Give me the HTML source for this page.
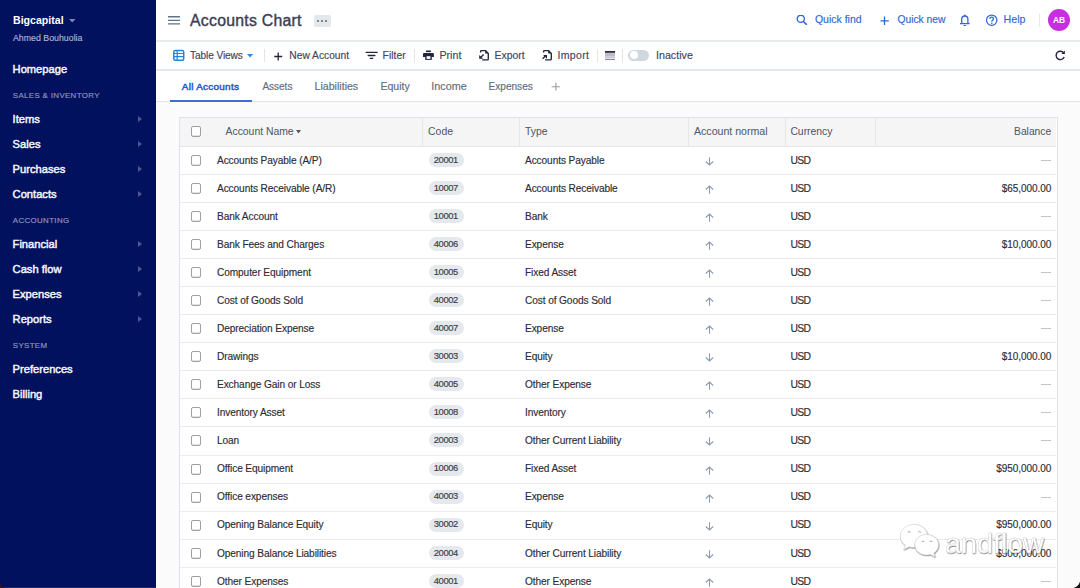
<!DOCTYPE html>
<html><head><meta charset="utf-8"><style>
html,body{margin:0;padding:0;width:1080px;height:588px;overflow:hidden;background:#fff;font-family:"Liberation Sans",sans-serif;}
.t{position:absolute;white-space:nowrap;}
.s{-webkit-text-stroke:0.15px currentColor;}
</style></head><body>
<div style="position:absolute;left:0;top:0;width:156px;height:588px;background:#01115e"></div>
<div class="t" style="top:14px;font-size:10.6px;line-height:12px;color:#fff;font-weight:700;left:13.00px;">Bigcapital</div>
<svg style="position:absolute;left:69px;top:19px" width="7" height="4"><path d="M0 0H6.5L3.25 3.5Z" fill="#7f88b3"/></svg>
<div class="t s" style="top:33px;font-size:8.8px;line-height:10px;color:#aeb4d0;left:13.00px;">Ahmed Bouhuolia</div>
<div class="t s" style="top:63px;font-size:11.15px;line-height:12px;color:#f4f5fa;left:12.60px;-webkit-text-stroke:0.45px #f4f5fa;">Homepage</div>
<div class="t s" style="top:91px;font-size:7.9px;line-height:9px;color:#8c94bb;letter-spacing:0.36px;left:12.80px;-webkit-text-stroke:0.18px #8c94bb;">SALES &amp; INVENTORY</div>
<div class="t s" style="top:113px;font-size:11.15px;line-height:12px;color:#f4f5fa;left:12.60px;-webkit-text-stroke:0.45px #f4f5fa;">Items</div>
<svg style="position:absolute;left:137.8px;top:115.8px" width="6" height="7"><path d="M0 0L4 3.05L0 6.1Z" fill="#4d5792"/></svg>
<div class="t s" style="top:138px;font-size:11.15px;line-height:12px;color:#f4f5fa;left:12.60px;-webkit-text-stroke:0.45px #f4f5fa;">Sales</div>
<svg style="position:absolute;left:137.8px;top:140.8px" width="6" height="7"><path d="M0 0L4 3.05L0 6.1Z" fill="#4d5792"/></svg>
<div class="t s" style="top:163px;font-size:11.15px;line-height:12px;color:#f4f5fa;left:12.60px;-webkit-text-stroke:0.45px #f4f5fa;">Purchases</div>
<svg style="position:absolute;left:137.8px;top:165.8px" width="6" height="7"><path d="M0 0L4 3.05L0 6.1Z" fill="#4d5792"/></svg>
<div class="t s" style="top:188px;font-size:11.15px;line-height:12px;color:#f4f5fa;left:12.60px;-webkit-text-stroke:0.45px #f4f5fa;">Contacts</div>
<svg style="position:absolute;left:137.8px;top:190.8px" width="6" height="7"><path d="M0 0L4 3.05L0 6.1Z" fill="#4d5792"/></svg>
<div class="t s" style="top:216px;font-size:7.9px;line-height:9px;color:#8c94bb;letter-spacing:0.36px;left:12.80px;-webkit-text-stroke:0.18px #8c94bb;">ACCOUNTING</div>
<div class="t s" style="top:238px;font-size:11.15px;line-height:12px;color:#f4f5fa;left:12.60px;-webkit-text-stroke:0.45px #f4f5fa;">Financial</div>
<svg style="position:absolute;left:137.8px;top:240.8px" width="6" height="7"><path d="M0 0L4 3.05L0 6.1Z" fill="#4d5792"/></svg>
<div class="t s" style="top:263px;font-size:11.15px;line-height:12px;color:#f4f5fa;left:12.60px;-webkit-text-stroke:0.45px #f4f5fa;">Cash flow</div>
<svg style="position:absolute;left:137.8px;top:265.8px" width="6" height="7"><path d="M0 0L4 3.05L0 6.1Z" fill="#4d5792"/></svg>
<div class="t s" style="top:288px;font-size:11.15px;line-height:12px;color:#f4f5fa;left:12.60px;-webkit-text-stroke:0.45px #f4f5fa;">Expenses</div>
<svg style="position:absolute;left:137.8px;top:290.8px" width="6" height="7"><path d="M0 0L4 3.05L0 6.1Z" fill="#4d5792"/></svg>
<div class="t s" style="top:313px;font-size:11.15px;line-height:12px;color:#f4f5fa;left:12.60px;-webkit-text-stroke:0.45px #f4f5fa;">Reports</div>
<svg style="position:absolute;left:137.8px;top:315.8px" width="6" height="7"><path d="M0 0L4 3.05L0 6.1Z" fill="#4d5792"/></svg>
<div class="t s" style="top:341px;font-size:7.9px;line-height:9px;color:#8c94bb;letter-spacing:0.36px;left:12.80px;-webkit-text-stroke:0.18px #8c94bb;">SYSTEM</div>
<div class="t s" style="top:363px;font-size:11.15px;line-height:12px;color:#f4f5fa;left:12.60px;-webkit-text-stroke:0.45px #f4f5fa;">Preferences</div>
<div class="t s" style="top:388px;font-size:11.15px;line-height:12px;color:#f4f5fa;left:12.60px;-webkit-text-stroke:0.45px #f4f5fa;">Billing</div>
<div style="position:absolute;left:156px;top:0;width:924px;height:40px;background:#fff;border-bottom:2px solid #e8eced"></div>
<svg style="position:absolute;left:167px;top:13px" width="14" height="14"><path d="M1 3.7H13M1 7.3H13M1 10.8H13" stroke="#5f7486" stroke-width="1.35"/></svg>
<div class="t s" style="top:12px;font-size:15.8px;line-height:17px;color:#3c3d52;letter-spacing:0.27px;left:190.00px;-webkit-text-stroke:0.4px #3c3d52;">Accounts Chart</div>
<div style="position:absolute;left:314px;top:15px;width:17px;height:11.5px;border-radius:2px;background:#e3e8ed"></div>
<div style="position:absolute;left:317.1px;top:19.5px;width:2.2px;height:2.2px;border-radius:50%;background:#566a7d"></div>
<div style="position:absolute;left:321.1px;top:19.5px;width:2.2px;height:2.2px;border-radius:50%;background:#566a7d"></div>
<div style="position:absolute;left:325.1px;top:19.5px;width:2.2px;height:2.2px;border-radius:50%;background:#566a7d"></div>
<svg style="position:absolute;left:796px;top:15px" width="12" height="10"><circle cx="4.8" cy="3.8" r="3.6" fill="none" stroke="#2f68d3" stroke-width="1.35"/><path d="M7.4 6.5L10.4 9.4" stroke="#2f68d3" stroke-width="1.5" stroke-linecap="round"/></svg>
<div class="t s" style="top:13px;font-size:10.5px;line-height:12px;color:#2f68d3;left:814.90px;">Quick find</div>
<svg style="position:absolute;left:880px;top:15.5px" width="10" height="10"><path d="M4.5 0.5V9M0.5 4.8H8.8" stroke="#2f68d3" stroke-width="1.3"/></svg>
<div class="t s" style="top:14px;font-size:10.3px;line-height:11px;color:#2f68d3;left:897.40px;">Quick new</div>
<svg style="position:absolute;left:960px;top:14px" width="10" height="13"><circle cx="4.8" cy="1.3" r="0.85" fill="#2f68d3"/><path d="M1.7 9.2V5.3C1.7 3.3 3 2 4.8 2C6.6 2 7.9 3.3 7.9 5.3V9.2" fill="none" stroke="#2f68d3" stroke-width="1.3"/><path d="M0.4 9.6H9.2" stroke="#2f68d3" stroke-width="1.3" stroke-linecap="round"/><path d="M4.1 11.5H5.5" stroke="#2f68d3" stroke-width="1.1" stroke-linecap="round"/></svg>
<svg style="position:absolute;left:985px;top:14px" width="14" height="14"><circle cx="6.7" cy="6.2" r="5.2" fill="none" stroke="#2f68d3" stroke-width="1.25"/><path d="M4.9 4.9C4.9 3.8 5.7 3.1 6.7 3.1C7.7 3.1 8.5 3.8 8.5 4.8C8.5 6.1 6.8 6.1 6.8 7.8" fill="none" stroke="#2f68d3" stroke-width="1.25"/><circle cx="6.8" cy="9.3" r="0.8" fill="#2f68d3"/></svg>
<div class="t s" style="top:13px;font-size:10.7px;line-height:12px;color:#2f68d3;left:1003.50px;">Help</div>
<div style="position:absolute;left:1039px;top:13.5px;width:1px;height:13px;background:#e6e9ec"></div>
<div style="position:absolute;left:1048px;top:9px;width:22px;height:22px;border-radius:50%;background:#c72ee0"></div>
<div class="t" style="top:15px;font-size:8.4px;line-height:10px;color:#fff;font-weight:700;left:1053.00px;">AB</div>
<div style="position:absolute;left:156px;top:42px;width:924px;height:27px;background:#fff;border-bottom:2px solid #e3e6ea"></div>
<svg style="position:absolute;left:168px;top:46px" width="20" height="18"><rect x="5.8" y="4.6" width="9.9" height="9.6" rx="1.5" fill="none" stroke="#2584dc" stroke-width="1.5"/><path d="M5.8 7.5H15.7M5.8 10.7H15.7M9.2 4.6V14.2" stroke="#2584dc" stroke-width="1.2"/></svg>
<div class="t s" style="top:50px;font-size:10.1px;line-height:11px;color:#44445a;letter-spacing:-0.08px;left:190.00px;">Table Views</div>
<svg style="position:absolute;left:246.5px;top:54px" width="7" height="4"><path d="M0 0H6.2L3.1 3.6Z" fill="#2f8ce0"/></svg>
<div style="position:absolute;left:264px;top:49px;width:1px;height:13px;background:#e1e5e9"></div>
<svg style="position:absolute;left:274px;top:51.5px" width="9" height="9"><path d="M4.2 0.5V8.5M0.3 4.5H8.2" stroke="#24243c" stroke-width="1.3"/></svg>
<div class="t s" style="top:50px;font-size:10.25px;line-height:11px;color:#44445a;left:289.30px;">New Account</div>
<svg style="position:absolute;left:362px;top:46px" width="20" height="18"><path d="M4.2 6.4H15.1M6.2 9.5H12.9M8.2 12.3H10.8" stroke="#24243c" stroke-width="1.35" stroke-linecap="round"/></svg>
<div class="t s" style="top:50px;font-size:10.4px;line-height:11px;color:#44445a;left:382.60px;">Filter</div>
<div style="position:absolute;left:414px;top:49px;width:1px;height:13px;background:#e1e5e9"></div>
<svg style="position:absolute;left:418px;top:46px" width="20" height="18"><rect x="8" y="4.5" width="4.9" height="1.6" fill="#24243c"/><path d="M6 7H14.9Q15.9 7 15.9 8V10.9H5V8Q5 7 6 7Z" fill="#24243c"/><path d="M7.2 9.2H13.8V13.9H7.2Z" fill="#24243c"/><rect x="8.6" y="10.2" width="3.8" height="2.7" fill="#fff"/></svg>
<div class="t s" style="top:49px;font-size:10.7px;line-height:12px;color:#44445a;left:439.40px;">Print</div>
<svg style="position:absolute;left:474px;top:46px" width="20" height="18"><path d="M6.6 6.6V5.3Q6.6 4.6 7.4 4.6H11.4L14.3 7.5V13Q14.3 13.9 13.4 13.9H8.2" fill="none" stroke="#24243c" stroke-width="1.35" stroke-linejoin="round"/><path d="M11.2 4.6L14.3 7.6H11.2Z" fill="#24243c"/><path d="M9.6 8.4L6.6 11.4" stroke="#24243c" stroke-width="1.35"/><path d="M5.2 8.9V12.8H9.1Z" fill="#24243c"/></svg>
<div class="t s" style="top:49px;font-size:10.5px;line-height:12px;color:#44445a;left:494.40px;">Export</div>
<svg style="position:absolute;left:537px;top:46px" width="20" height="18"><path d="M6.6 6.6V5.3Q6.6 4.6 7.4 4.6H11.4L14.3 7.5V13Q14.3 13.9 13.4 13.9H8.2" fill="none" stroke="#24243c" stroke-width="1.35" stroke-linejoin="round"/><path d="M11.2 4.6L14.3 7.6H11.2Z" fill="#24243c"/><path d="M5.6 12.8L8.6 9.8" stroke="#24243c" stroke-width="1.35"/><path d="M6.1 8.9H10V12.8Z" fill="#24243c"/></svg>
<div class="t s" style="top:49px;font-size:10.5px;line-height:12px;color:#44445a;left:557.40px;letter-spacing:0.35px;">Import</div>
<div style="position:absolute;left:597px;top:49px;width:1px;height:13px;background:#e1e5e9"></div>
<svg style="position:absolute;left:600px;top:46px" width="20" height="18"><rect x="5" y="5" width="10" height="1.8" fill="#2a2a46"/><rect x="5" y="7" width="10" height="3.2" fill="#bdbdc9"/><rect x="5" y="10.6" width="10" height="1.1" fill="#9d9dae"/><rect x="5" y="13" width="10" height="1" fill="#8a8a9c"/><rect x="5" y="11.7" width="10" height="1.3" fill="#e4e4ea"/></svg>
<div style="position:absolute;left:622px;top:49px;width:1px;height:13px;background:#e1e5e9"></div>
<div style="position:absolute;left:628.3px;top:50px;width:20.4px;height:10.7px;border-radius:6px;background:#cfd7df"></div>
<div style="position:absolute;left:629.6px;top:51.3px;width:8.2px;height:8.2px;border-radius:50%;background:#fff"></div>
<div class="t s" style="top:49px;font-size:10.7px;line-height:12px;color:#44445a;left:656.00px;">Inactive</div>
<svg style="position:absolute;left:1055px;top:50px" width="11" height="11"><path d="M8.9 3.2A4.2 4.2 0 1 0 9.2 7" fill="none" stroke="#25253d" stroke-width="1.4"/><path d="M6.3 4.1H9.9V0.5Z" fill="#25253d"/></svg>
<div style="position:absolute;left:156px;top:71px;width:924px;height:30px;background:#fff;border-bottom:1.3px solid #e1e5e9"></div>
<div class="t s" style="top:81px;font-size:9.9px;line-height:11px;color:#2559c9;letter-spacing:0.3px;left:181.80px;-webkit-text-stroke:0.5px #2559c9;">All Accounts</div>
<div style="position:absolute;left:170px;top:99.5px;width:82px;height:2px;background:#3a6fd5"></div>
<div class="t s" style="top:81px;font-size:10px;line-height:11px;color:#606c7d;left:262.40px;">Assets</div>
<div class="t s" style="top:80px;font-size:10.6px;line-height:12px;color:#606c7d;left:314.60px;">Liabilities</div>
<div class="t s" style="top:80px;font-size:10.6px;line-height:12px;color:#606c7d;left:380.40px;">Equity</div>
<div class="t s" style="top:80px;font-size:10.8px;line-height:12px;color:#606c7d;left:431.30px;">Income</div>
<div class="t s" style="top:81px;font-size:10.1px;line-height:11px;color:#606c7d;left:488.50px;">Expenses</div>
<svg style="position:absolute;left:550.5px;top:81.5px" width="10" height="10"><path d="M4.9 0.7V8.4M0.7 4.7H9.1" stroke="#9d9d9f" stroke-width="1.15"/></svg>
<div style="position:absolute;left:156px;top:102px;width:924px;height:486px;background:#fbfbfc"></div>
<div style="position:absolute;left:179px;top:117px;width:877px;height:480px;background:#fff;border:1px solid #dde3e8;border-bottom:none"></div>
<div style="position:absolute;left:180px;top:118px;width:876px;height:28px;background:#f5f5f6;border-bottom:1px solid #e2e6ea"></div>
<div style="position:absolute;left:422.0px;top:118px;width:1px;height:28px;background:#e4e7ea"></div>
<div style="position:absolute;left:519.0px;top:118px;width:1px;height:28px;background:#e4e7ea"></div>
<div style="position:absolute;left:688.0px;top:118px;width:1px;height:28px;background:#e4e7ea"></div>
<div style="position:absolute;left:784.5px;top:118px;width:1px;height:28px;background:#e4e7ea"></div>
<div style="position:absolute;left:875.0px;top:118px;width:1px;height:28px;background:#e4e7ea"></div>
<div style="position:absolute;left:191px;top:126.2px;width:8.3px;height:8.5px;border:1px solid #a0a0a2;border-radius:2px;background:#fff;box-shadow:inset 0 -1px 0 #e4e4e4"></div>
<div class="t s" style="top:126px;font-size:10.4px;line-height:11px;color:#4f5a6a;left:225.50px;-webkit-text-stroke:0.05px #4f5a6a;">Account Name</div>
<svg style="position:absolute;left:296px;top:129.8px" width="6" height="4"><path d="M0 0H5L2.5 3.4Z" fill="#505560"/></svg>
<div class="t s" style="top:126px;font-size:10.4px;line-height:11px;color:#4f5a6a;left:428.10px;-webkit-text-stroke:0.05px #4f5a6a;">Code</div>
<div class="t s" style="top:126px;font-size:10.4px;line-height:11px;color:#4f5a6a;left:525.00px;-webkit-text-stroke:0.05px #4f5a6a;">Type</div>
<div class="t s" style="top:125px;font-size:10.6px;line-height:12px;color:#4f5a6a;left:694.00px;-webkit-text-stroke:0.05px #4f5a6a;">Account normal</div>
<div class="t s" style="top:126px;font-size:10.36px;line-height:11px;color:#4f5a6a;left:790.40px;-webkit-text-stroke:0.05px #4f5a6a;">Currency</div>
<div class="t s" style="top:126px;font-size:10.26px;line-height:11px;color:#4f5a6a;right:28.90px;-webkit-text-stroke:0.05px #4f5a6a;">Balance</div>
<div style="position:absolute;left:191px;top:155.2px;width:8.3px;height:8.5px;border:1px solid #a0a0a2;border-radius:2px;background:#fff;box-shadow:inset 0 -1px 0 #e4e4e4"></div>
<div class="t s" style="top:155px;font-size:10.15px;line-height:11px;color:#2c2d35;letter-spacing:-0.1px;left:217.00px;">Accounts Payable (A/P)</div>
<div style="position:absolute;left:428.5px;top:153px;width:35px;height:13.6px;border-radius:7px;background:#e5e8ec"></div>
<div class="t s" style="top:154px;font-size:9.4px;line-height:11px;color:#3a3d44;letter-spacing:-0.4px;left:433.80px;">20001</div>
<div class="t s" style="top:155px;font-size:10.15px;line-height:11px;color:#2c2d35;letter-spacing:-0.1px;left:525.00px;">Accounts Payable</div>
<svg style="position:absolute;left:705px;top:156.5px" width="9" height="9"><path d="M4.5 0.3V8M0.8 4.5L4.5 8L8.2 4.5" fill="none" stroke="#8a9bb0" stroke-width="1.05"/></svg>
<div class="t s" style="top:155px;font-size:10.4px;line-height:11px;color:#2c2d35;letter-spacing:-0.8px;left:790.60px;">USD</div>
<div style="position:absolute;left:1041.3px;top:159.6px;width:9.7px;height:1.1px;background:#c3c6ca"></div>
<div style="position:absolute;left:180px;top:174px;width:876px;height:1px;background:#e9ecee"></div>
<div style="position:absolute;left:191px;top:183.2px;width:8.3px;height:8.5px;border:1px solid #a0a0a2;border-radius:2px;background:#fff;box-shadow:inset 0 -1px 0 #e4e4e4"></div>
<div class="t s" style="top:183px;font-size:10.15px;line-height:11px;color:#2c2d35;letter-spacing:-0.1px;left:217.00px;">Accounts Receivable (A/R)</div>
<div style="position:absolute;left:428.5px;top:181px;width:35px;height:13.6px;border-radius:7px;background:#e5e8ec"></div>
<div class="t s" style="top:182px;font-size:9.4px;line-height:11px;color:#3a3d44;letter-spacing:-0.4px;left:433.80px;">10007</div>
<div class="t s" style="top:183px;font-size:10.15px;line-height:11px;color:#2c2d35;letter-spacing:-0.1px;left:525.00px;">Accounts Receivable</div>
<svg style="position:absolute;left:705px;top:185px" width="9" height="9"><path d="M4.5 8.7V1M0.8 4.5L4.5 1L8.2 4.5" fill="none" stroke="#8a9bb0" stroke-width="1.05"/></svg>
<div class="t s" style="top:183px;font-size:10.4px;line-height:11px;color:#2c2d35;letter-spacing:-0.8px;left:790.60px;">USD</div>
<div class="t s" style="top:183px;font-size:10.0px;line-height:11px;color:#2c2d35;letter-spacing:-0.05px;right:28.80px;">$65,000.00</div>
<div style="position:absolute;left:180px;top:202px;width:876px;height:1px;background:#e9ecee"></div>
<div style="position:absolute;left:191px;top:211.2px;width:8.3px;height:8.5px;border:1px solid #a0a0a2;border-radius:2px;background:#fff;box-shadow:inset 0 -1px 0 #e4e4e4"></div>
<div class="t s" style="top:211px;font-size:10.15px;line-height:11px;color:#2c2d35;letter-spacing:-0.1px;left:217.00px;">Bank Account</div>
<div style="position:absolute;left:428.5px;top:209px;width:35px;height:13.6px;border-radius:7px;background:#e5e8ec"></div>
<div class="t s" style="top:210px;font-size:9.4px;line-height:11px;color:#3a3d44;letter-spacing:-0.4px;left:433.80px;">10001</div>
<div class="t s" style="top:211px;font-size:10.15px;line-height:11px;color:#2c2d35;letter-spacing:-0.1px;left:525.00px;">Bank</div>
<svg style="position:absolute;left:705px;top:213px" width="9" height="9"><path d="M4.5 8.7V1M0.8 4.5L4.5 1L8.2 4.5" fill="none" stroke="#8a9bb0" stroke-width="1.05"/></svg>
<div class="t s" style="top:211px;font-size:10.4px;line-height:11px;color:#2c2d35;letter-spacing:-0.8px;left:790.60px;">USD</div>
<div style="position:absolute;left:1041.3px;top:215.6px;width:9.7px;height:1.1px;background:#c3c6ca"></div>
<div style="position:absolute;left:180px;top:230px;width:876px;height:1px;background:#e9ecee"></div>
<div style="position:absolute;left:191px;top:239.2px;width:8.3px;height:8.5px;border:1px solid #a0a0a2;border-radius:2px;background:#fff;box-shadow:inset 0 -1px 0 #e4e4e4"></div>
<div class="t s" style="top:239px;font-size:10.15px;line-height:11px;color:#2c2d35;letter-spacing:-0.1px;left:217.00px;">Bank Fees and Charges</div>
<div style="position:absolute;left:428.5px;top:237px;width:35px;height:13.6px;border-radius:7px;background:#e5e8ec"></div>
<div class="t s" style="top:238px;font-size:9.4px;line-height:11px;color:#3a3d44;letter-spacing:-0.4px;left:433.80px;">40006</div>
<div class="t s" style="top:239px;font-size:10.15px;line-height:11px;color:#2c2d35;letter-spacing:-0.1px;left:525.00px;">Expense</div>
<svg style="position:absolute;left:705px;top:241px" width="9" height="9"><path d="M4.5 8.7V1M0.8 4.5L4.5 1L8.2 4.5" fill="none" stroke="#8a9bb0" stroke-width="1.05"/></svg>
<div class="t s" style="top:239px;font-size:10.4px;line-height:11px;color:#2c2d35;letter-spacing:-0.8px;left:790.60px;">USD</div>
<div class="t s" style="top:239px;font-size:10.0px;line-height:11px;color:#2c2d35;letter-spacing:-0.05px;right:28.80px;">$10,000.00</div>
<div style="position:absolute;left:180px;top:258px;width:876px;height:1px;background:#e9ecee"></div>
<div style="position:absolute;left:191px;top:267.2px;width:8.3px;height:8.5px;border:1px solid #a0a0a2;border-radius:2px;background:#fff;box-shadow:inset 0 -1px 0 #e4e4e4"></div>
<div class="t s" style="top:267px;font-size:10.15px;line-height:11px;color:#2c2d35;letter-spacing:-0.1px;left:217.00px;">Computer Equipment</div>
<div style="position:absolute;left:428.5px;top:265px;width:35px;height:13.6px;border-radius:7px;background:#e5e8ec"></div>
<div class="t s" style="top:266px;font-size:9.4px;line-height:11px;color:#3a3d44;letter-spacing:-0.4px;left:433.80px;">10005</div>
<div class="t s" style="top:267px;font-size:10.15px;line-height:11px;color:#2c2d35;letter-spacing:-0.1px;left:525.00px;">Fixed Asset</div>
<svg style="position:absolute;left:705px;top:269px" width="9" height="9"><path d="M4.5 8.7V1M0.8 4.5L4.5 1L8.2 4.5" fill="none" stroke="#8a9bb0" stroke-width="1.05"/></svg>
<div class="t s" style="top:267px;font-size:10.4px;line-height:11px;color:#2c2d35;letter-spacing:-0.8px;left:790.60px;">USD</div>
<div style="position:absolute;left:1041.3px;top:271.6px;width:9.7px;height:1.1px;background:#c3c6ca"></div>
<div style="position:absolute;left:180px;top:286px;width:876px;height:1px;background:#e9ecee"></div>
<div style="position:absolute;left:191px;top:295.2px;width:8.3px;height:8.5px;border:1px solid #a0a0a2;border-radius:2px;background:#fff;box-shadow:inset 0 -1px 0 #e4e4e4"></div>
<div class="t s" style="top:295px;font-size:10.15px;line-height:11px;color:#2c2d35;letter-spacing:-0.1px;left:217.00px;">Cost of Goods Sold</div>
<div style="position:absolute;left:428.5px;top:293px;width:35px;height:13.6px;border-radius:7px;background:#e5e8ec"></div>
<div class="t s" style="top:294px;font-size:9.4px;line-height:11px;color:#3a3d44;letter-spacing:-0.4px;left:433.80px;">40002</div>
<div class="t s" style="top:295px;font-size:10.15px;line-height:11px;color:#2c2d35;letter-spacing:-0.1px;left:525.00px;">Cost of Goods Sold</div>
<svg style="position:absolute;left:705px;top:297px" width="9" height="9"><path d="M4.5 8.7V1M0.8 4.5L4.5 1L8.2 4.5" fill="none" stroke="#8a9bb0" stroke-width="1.05"/></svg>
<div class="t s" style="top:295px;font-size:10.4px;line-height:11px;color:#2c2d35;letter-spacing:-0.8px;left:790.60px;">USD</div>
<div style="position:absolute;left:1041.3px;top:299.6px;width:9.7px;height:1.1px;background:#c3c6ca"></div>
<div style="position:absolute;left:180px;top:314px;width:876px;height:1px;background:#e9ecee"></div>
<div style="position:absolute;left:191px;top:323.2px;width:8.3px;height:8.5px;border:1px solid #a0a0a2;border-radius:2px;background:#fff;box-shadow:inset 0 -1px 0 #e4e4e4"></div>
<div class="t s" style="top:323px;font-size:10.15px;line-height:11px;color:#2c2d35;letter-spacing:-0.1px;left:217.00px;">Depreciation Expense</div>
<div style="position:absolute;left:428.5px;top:321px;width:35px;height:13.6px;border-radius:7px;background:#e5e8ec"></div>
<div class="t s" style="top:322px;font-size:9.4px;line-height:11px;color:#3a3d44;letter-spacing:-0.4px;left:433.80px;">40007</div>
<div class="t s" style="top:323px;font-size:10.15px;line-height:11px;color:#2c2d35;letter-spacing:-0.1px;left:525.00px;">Expense</div>
<svg style="position:absolute;left:705px;top:325px" width="9" height="9"><path d="M4.5 8.7V1M0.8 4.5L4.5 1L8.2 4.5" fill="none" stroke="#8a9bb0" stroke-width="1.05"/></svg>
<div class="t s" style="top:323px;font-size:10.4px;line-height:11px;color:#2c2d35;letter-spacing:-0.8px;left:790.60px;">USD</div>
<div style="position:absolute;left:1041.3px;top:327.6px;width:9.7px;height:1.1px;background:#c3c6ca"></div>
<div style="position:absolute;left:180px;top:342px;width:876px;height:1px;background:#e9ecee"></div>
<div style="position:absolute;left:191px;top:351.2px;width:8.3px;height:8.5px;border:1px solid #a0a0a2;border-radius:2px;background:#fff;box-shadow:inset 0 -1px 0 #e4e4e4"></div>
<div class="t s" style="top:351px;font-size:10.15px;line-height:11px;color:#2c2d35;letter-spacing:-0.1px;left:217.00px;">Drawings</div>
<div style="position:absolute;left:428.5px;top:349px;width:35px;height:13.6px;border-radius:7px;background:#e5e8ec"></div>
<div class="t s" style="top:350px;font-size:9.4px;line-height:11px;color:#3a3d44;letter-spacing:-0.4px;left:433.80px;">30003</div>
<div class="t s" style="top:351px;font-size:10.15px;line-height:11px;color:#2c2d35;letter-spacing:-0.1px;left:525.00px;">Equity</div>
<svg style="position:absolute;left:705px;top:352.5px" width="9" height="9"><path d="M4.5 0.3V8M0.8 4.5L4.5 8L8.2 4.5" fill="none" stroke="#8a9bb0" stroke-width="1.05"/></svg>
<div class="t s" style="top:351px;font-size:10.4px;line-height:11px;color:#2c2d35;letter-spacing:-0.8px;left:790.60px;">USD</div>
<div class="t s" style="top:351px;font-size:10.0px;line-height:11px;color:#2c2d35;letter-spacing:-0.05px;right:28.80px;">$10,000.00</div>
<div style="position:absolute;left:180px;top:370px;width:876px;height:1px;background:#e9ecee"></div>
<div style="position:absolute;left:191px;top:379.2px;width:8.3px;height:8.5px;border:1px solid #a0a0a2;border-radius:2px;background:#fff;box-shadow:inset 0 -1px 0 #e4e4e4"></div>
<div class="t s" style="top:379px;font-size:10.15px;line-height:11px;color:#2c2d35;letter-spacing:-0.1px;left:217.00px;">Exchange Gain or Loss</div>
<div style="position:absolute;left:428.5px;top:377px;width:35px;height:13.6px;border-radius:7px;background:#e5e8ec"></div>
<div class="t s" style="top:378px;font-size:9.4px;line-height:11px;color:#3a3d44;letter-spacing:-0.4px;left:433.80px;">40005</div>
<div class="t s" style="top:379px;font-size:10.15px;line-height:11px;color:#2c2d35;letter-spacing:-0.1px;left:525.00px;">Other Expense</div>
<svg style="position:absolute;left:705px;top:381px" width="9" height="9"><path d="M4.5 8.7V1M0.8 4.5L4.5 1L8.2 4.5" fill="none" stroke="#8a9bb0" stroke-width="1.05"/></svg>
<div class="t s" style="top:379px;font-size:10.4px;line-height:11px;color:#2c2d35;letter-spacing:-0.8px;left:790.60px;">USD</div>
<div style="position:absolute;left:1041.3px;top:383.6px;width:9.7px;height:1.1px;background:#c3c6ca"></div>
<div style="position:absolute;left:180px;top:398px;width:876px;height:1px;background:#e9ecee"></div>
<div style="position:absolute;left:191px;top:407.2px;width:8.3px;height:8.5px;border:1px solid #a0a0a2;border-radius:2px;background:#fff;box-shadow:inset 0 -1px 0 #e4e4e4"></div>
<div class="t s" style="top:407px;font-size:10.15px;line-height:11px;color:#2c2d35;letter-spacing:-0.1px;left:217.00px;">Inventory Asset</div>
<div style="position:absolute;left:428.5px;top:405px;width:35px;height:13.6px;border-radius:7px;background:#e5e8ec"></div>
<div class="t s" style="top:406px;font-size:9.4px;line-height:11px;color:#3a3d44;letter-spacing:-0.4px;left:433.80px;">10008</div>
<div class="t s" style="top:407px;font-size:10.15px;line-height:11px;color:#2c2d35;letter-spacing:-0.1px;left:525.00px;">Inventory</div>
<svg style="position:absolute;left:705px;top:409px" width="9" height="9"><path d="M4.5 8.7V1M0.8 4.5L4.5 1L8.2 4.5" fill="none" stroke="#8a9bb0" stroke-width="1.05"/></svg>
<div class="t s" style="top:407px;font-size:10.4px;line-height:11px;color:#2c2d35;letter-spacing:-0.8px;left:790.60px;">USD</div>
<div style="position:absolute;left:1041.3px;top:411.6px;width:9.7px;height:1.1px;background:#c3c6ca"></div>
<div style="position:absolute;left:180px;top:426px;width:876px;height:1px;background:#e9ecee"></div>
<div style="position:absolute;left:191px;top:435.2px;width:8.3px;height:8.5px;border:1px solid #a0a0a2;border-radius:2px;background:#fff;box-shadow:inset 0 -1px 0 #e4e4e4"></div>
<div class="t s" style="top:435px;font-size:10.15px;line-height:11px;color:#2c2d35;letter-spacing:-0.1px;left:217.00px;">Loan</div>
<div style="position:absolute;left:428.5px;top:433px;width:35px;height:13.6px;border-radius:7px;background:#e5e8ec"></div>
<div class="t s" style="top:434px;font-size:9.4px;line-height:11px;color:#3a3d44;letter-spacing:-0.4px;left:433.80px;">20003</div>
<div class="t s" style="top:435px;font-size:10.15px;line-height:11px;color:#2c2d35;letter-spacing:-0.1px;left:525.00px;">Other Current Liability</div>
<svg style="position:absolute;left:705px;top:436.5px" width="9" height="9"><path d="M4.5 0.3V8M0.8 4.5L4.5 8L8.2 4.5" fill="none" stroke="#8a9bb0" stroke-width="1.05"/></svg>
<div class="t s" style="top:435px;font-size:10.4px;line-height:11px;color:#2c2d35;letter-spacing:-0.8px;left:790.60px;">USD</div>
<div style="position:absolute;left:1041.3px;top:439.6px;width:9.7px;height:1.1px;background:#c3c6ca"></div>
<div style="position:absolute;left:180px;top:455px;width:876px;height:1px;background:#e9ecee"></div>
<div style="position:absolute;left:191px;top:464.2px;width:8.3px;height:8.5px;border:1px solid #a0a0a2;border-radius:2px;background:#fff;box-shadow:inset 0 -1px 0 #e4e4e4"></div>
<div class="t s" style="top:463px;font-size:10.15px;line-height:11px;color:#2c2d35;letter-spacing:-0.1px;left:217.00px;">Office Equipment</div>
<div style="position:absolute;left:428.5px;top:462px;width:35px;height:13.6px;border-radius:7px;background:#e5e8ec"></div>
<div class="t s" style="top:462px;font-size:9.4px;line-height:11px;color:#3a3d44;letter-spacing:-0.4px;left:433.80px;">10006</div>
<div class="t s" style="top:463px;font-size:10.15px;line-height:11px;color:#2c2d35;letter-spacing:-0.1px;left:525.00px;">Fixed Asset</div>
<svg style="position:absolute;left:705px;top:466px" width="9" height="9"><path d="M4.5 8.7V1M0.8 4.5L4.5 1L8.2 4.5" fill="none" stroke="#8a9bb0" stroke-width="1.05"/></svg>
<div class="t s" style="top:463px;font-size:10.4px;line-height:11px;color:#2c2d35;letter-spacing:-0.8px;left:790.60px;">USD</div>
<div class="t s" style="top:463px;font-size:10.0px;line-height:11px;color:#2c2d35;letter-spacing:-0.05px;right:28.80px;">$950,000.00</div>
<div style="position:absolute;left:180px;top:483px;width:876px;height:1px;background:#e9ecee"></div>
<div style="position:absolute;left:191px;top:492.2px;width:8.3px;height:8.5px;border:1px solid #a0a0a2;border-radius:2px;background:#fff;box-shadow:inset 0 -1px 0 #e4e4e4"></div>
<div class="t s" style="top:491px;font-size:10.15px;line-height:11px;color:#2c2d35;letter-spacing:-0.1px;left:217.00px;">Office expenses</div>
<div style="position:absolute;left:428.5px;top:490px;width:35px;height:13.6px;border-radius:7px;background:#e5e8ec"></div>
<div class="t s" style="top:490px;font-size:9.4px;line-height:11px;color:#3a3d44;letter-spacing:-0.4px;left:433.80px;">40003</div>
<div class="t s" style="top:491px;font-size:10.15px;line-height:11px;color:#2c2d35;letter-spacing:-0.1px;left:525.00px;">Expense</div>
<svg style="position:absolute;left:705px;top:494px" width="9" height="9"><path d="M4.5 8.7V1M0.8 4.5L4.5 1L8.2 4.5" fill="none" stroke="#8a9bb0" stroke-width="1.05"/></svg>
<div class="t s" style="top:491px;font-size:10.4px;line-height:11px;color:#2c2d35;letter-spacing:-0.8px;left:790.60px;">USD</div>
<div style="position:absolute;left:1041.3px;top:496.6px;width:9.7px;height:1.1px;background:#c3c6ca"></div>
<div style="position:absolute;left:180px;top:511px;width:876px;height:1px;background:#e9ecee"></div>
<div style="position:absolute;left:191px;top:520.2px;width:8.3px;height:8.5px;border:1px solid #a0a0a2;border-radius:2px;background:#fff;box-shadow:inset 0 -1px 0 #e4e4e4"></div>
<div class="t s" style="top:519px;font-size:10.15px;line-height:11px;color:#2c2d35;letter-spacing:-0.1px;left:217.00px;">Opening Balance Equity</div>
<div style="position:absolute;left:428.5px;top:518px;width:35px;height:13.6px;border-radius:7px;background:#e5e8ec"></div>
<div class="t s" style="top:518px;font-size:9.4px;line-height:11px;color:#3a3d44;letter-spacing:-0.4px;left:433.80px;">30002</div>
<div class="t s" style="top:519px;font-size:10.15px;line-height:11px;color:#2c2d35;letter-spacing:-0.1px;left:525.00px;">Equity</div>
<svg style="position:absolute;left:705px;top:521.5px" width="9" height="9"><path d="M4.5 0.3V8M0.8 4.5L4.5 8L8.2 4.5" fill="none" stroke="#8a9bb0" stroke-width="1.05"/></svg>
<div class="t s" style="top:519px;font-size:10.4px;line-height:11px;color:#2c2d35;letter-spacing:-0.8px;left:790.60px;">USD</div>
<div class="t s" style="top:519px;font-size:10.0px;line-height:11px;color:#2c2d35;letter-spacing:-0.05px;right:28.80px;">$950,000.00</div>
<div style="position:absolute;left:180px;top:539px;width:876px;height:1px;background:#e9ecee"></div>
<div style="position:absolute;left:191px;top:548.2px;width:8.3px;height:8.5px;border:1px solid #a0a0a2;border-radius:2px;background:#fff;box-shadow:inset 0 -1px 0 #e4e4e4"></div>
<div class="t s" style="top:548px;font-size:10.15px;line-height:11px;color:#2c2d35;letter-spacing:-0.1px;left:217.00px;">Opening Balance Liabilities</div>
<div style="position:absolute;left:428.5px;top:546px;width:35px;height:13.6px;border-radius:7px;background:#e5e8ec"></div>
<div class="t s" style="top:547px;font-size:9.4px;line-height:11px;color:#3a3d44;letter-spacing:-0.4px;left:433.80px;">20004</div>
<div class="t s" style="top:548px;font-size:10.15px;line-height:11px;color:#2c2d35;letter-spacing:-0.1px;left:525.00px;">Other Current Liability</div>
<svg style="position:absolute;left:705px;top:549.5px" width="9" height="9"><path d="M4.5 0.3V8M0.8 4.5L4.5 8L8.2 4.5" fill="none" stroke="#8a9bb0" stroke-width="1.05"/></svg>
<div class="t s" style="top:548px;font-size:10.4px;line-height:11px;color:#2c2d35;letter-spacing:-0.8px;left:790.60px;">USD</div>
<div class="t s" style="top:548px;font-size:10.0px;line-height:11px;color:#2c2d35;letter-spacing:-0.05px;right:28.80px;">$500,000.00</div>
<div style="position:absolute;left:180px;top:567px;width:876px;height:1px;background:#e9ecee"></div>
<div style="position:absolute;left:191px;top:576.2px;width:8.3px;height:8.5px;border:1px solid #a0a0a2;border-radius:2px;background:#fff;box-shadow:inset 0 -1px 0 #e4e4e4"></div>
<div class="t s" style="top:576px;font-size:10.15px;line-height:11px;color:#2c2d35;letter-spacing:-0.1px;left:217.00px;">Other Expenses</div>
<div style="position:absolute;left:428.5px;top:574px;width:35px;height:13.6px;border-radius:7px;background:#e5e8ec"></div>
<div class="t s" style="top:575px;font-size:9.4px;line-height:11px;color:#3a3d44;letter-spacing:-0.4px;left:433.80px;">40001</div>
<div class="t s" style="top:576px;font-size:10.15px;line-height:11px;color:#2c2d35;letter-spacing:-0.1px;left:525.00px;">Other Expense</div>
<svg style="position:absolute;left:705px;top:578px" width="9" height="9"><path d="M4.5 8.7V1M0.8 4.5L4.5 1L8.2 4.5" fill="none" stroke="#8a9bb0" stroke-width="1.05"/></svg>
<div class="t s" style="top:576px;font-size:10.4px;line-height:11px;color:#2c2d35;letter-spacing:-0.8px;left:790.60px;">USD</div>
<div style="position:absolute;left:1041.3px;top:580.6px;width:9.7px;height:1.1px;background:#c3c6ca"></div>
<svg style="position:absolute;left:896px;top:520px;overflow:visible" width="160" height="42" viewBox="0 0 160 42">
<defs><filter id="sh" x="-20%" y="-20%" width="140%" height="140%"><feDropShadow dx="0.4" dy="0.6" stdDeviation="0.4" flood-color="#000" flood-opacity="0.75"/></filter></defs>
<path filter="url(#sh)" fill="#fff" stroke="#d0d0d0" stroke-width="0.5" d="M18 4.5C10.5 4.5 4.3 9.7 4.3 16.2C4.3 19.8 6.2 23 9.2 25.1L7.8 29.5L13.2 26.8C14.8 27.3 16.4 27.6 18 27.6C25.5 27.6 31.6 22.4 31.6 16.2C31.6 9.7 25.5 4.5 18 4.5Z"/>
<path filter="url(#sh)" fill="#fff" stroke="#c8c8c8" stroke-width="0.5" d="M30.5 14.5C24 14.5 18.8 19 18.8 24.8C18.8 30.5 24 35 30.5 35C31.9 35 33.2 34.8 34.4 34.4L39 37L37.8 33C41 31.2 42.5 28.2 42.5 24.8C42.5 19 37.2 14.5 30.5 14.5Z"/>
<g fill="none" stroke="#888" stroke-width="0.7"><path d="M12 12.6A1.1 1.1 0 0 1 14.2 12.6M22.5 12.6A1.1 1.1 0 0 1 24.7 12.6M26 22A1 1 0 0 1 28 22M34 22A1 1 0 0 1 36 22"/></g>
<text filter="url(#sh)" x="49" y="32.8" font-family="Liberation Sans" font-size="28.5" textLength="99" lengthAdjust="spacingAndGlyphs" fill="#fff" stroke="#d8d8d8" stroke-width="0.3">andflow</text>
</svg>
<div style="position:absolute;left:0;top:587px;width:156px;height:1px;background:#1e2a6c"></div>
<div style="position:absolute;right:0;bottom:0;width:8px;height:8px;background:radial-gradient(circle at 0 0,transparent 7.3px,#fff 7.6px,#111 8.4px)"></div>
<div style="position:absolute;left:0;bottom:0;width:5px;height:5px;background:radial-gradient(circle at 100% 0,transparent 4.3px,#3a1010 5px)"></div>
</body></html>
